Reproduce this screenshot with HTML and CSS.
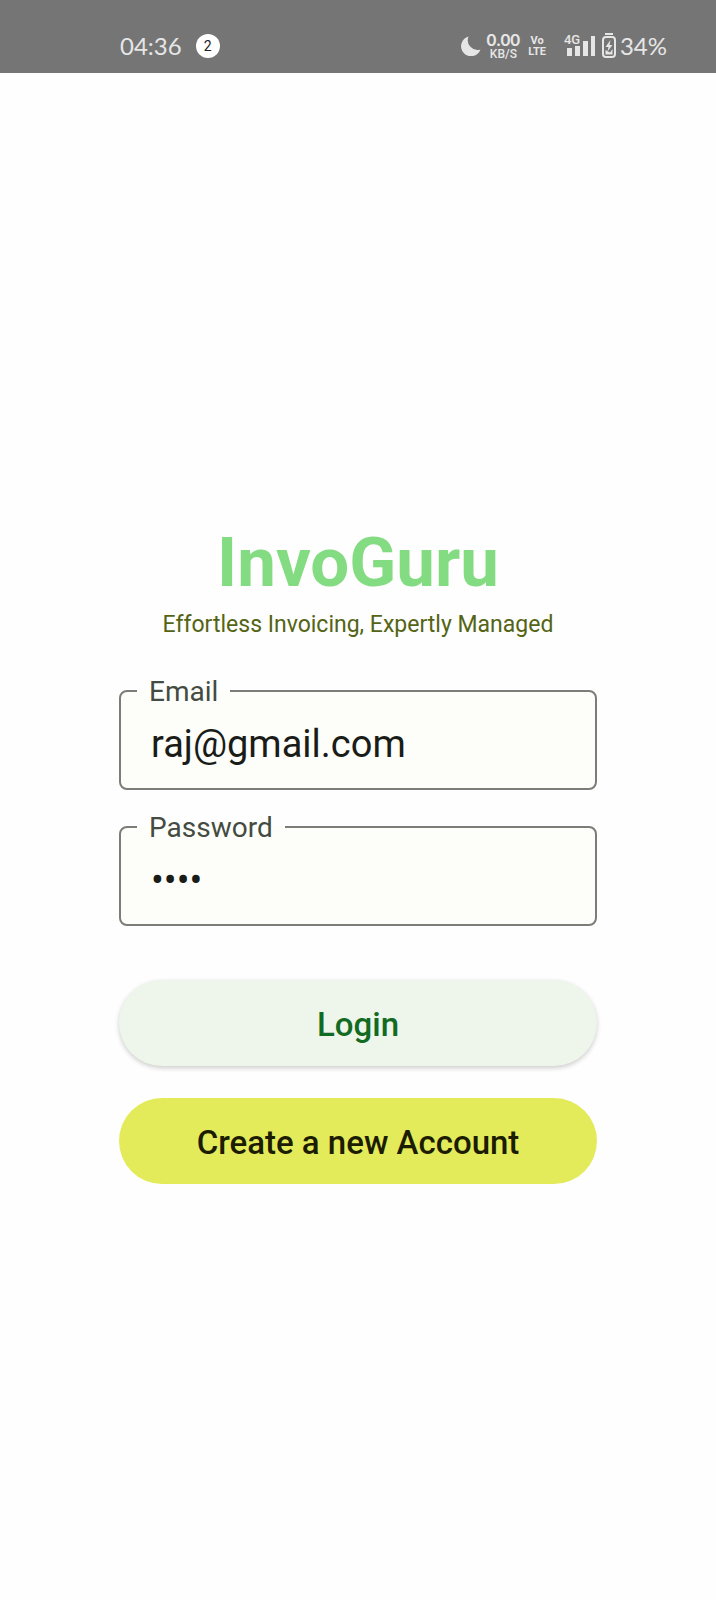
FILE: index.html
```
<!DOCTYPE html>
<html lang="en">
<head>
<meta charset="utf-8">
<meta name="viewport" content="width=device-width, initial-scale=1">
<title>InvoGuru</title>
<link rel="stylesheet" href="styles.css">
</head>
<body>
<header class="status">
  <div class="status-left">
    <span class="clock">04:36</span>
    <span class="count">2</span>
  </div>
  <div class="status-right">
    <svg class="moon" width="20" height="20" viewBox="0 0 20 20" aria-hidden="true"><path d="M7.500 0.500A10 10 0 1 0 19.500 13.500A9.800 9.800 0 0 1 7.500 0.500Z"/></svg>
    <div class="speed"><span class="rate">0.00</span><span class="unit">KB/S</span></div>
    <div class="volte"><span>Vo</span><span>LTE</span></div>
    <div class="signal">
      <span class="network">4G</span>
      <svg width="30" height="22" viewBox="0 0 30 22" aria-hidden="true"><path d="M1 13h5v8h-5zM9 11h5v10h-5zM17 6h5v15h-5zM25 1h4v20h-4z"/></svg>
    </div>
    <svg class="battery" width="14" height="26" viewBox="0 0 14 26" aria-hidden="true"><path d="M3 0h8v2H3z"/><rect class="shell" x="1" y="4" width="12" height="20" rx="3"/><path d="M8.500 7L3.500 14H6.500L5.500 18.500L10.500 12H7.500Z"/><path d="M3.500 17v4.500h7V16L8 19.500z"/></svg>
    <span class="level">34%</span>
  </div>
</header>
<main class="login">
  <h1 class="brand">InvoGuru</h1>
  <p class="tagline">Effortless Invoicing, Expertly Managed</p>
  <form class="form">
    <fieldset class="field">
      <legend class="legend"><label for="email">Email</label></legend>
      <input class="input" id="email" type="email" value="raj@gmail.com">
    </fieldset>
    <fieldset class="field">
      <legend class="legend"><label for="password">Password</label></legend>
      <input class="input" id="password" type="password" value="1234">
    </fieldset>
    <div class="actions">
      <button class="button button-login" type="submit">Login</button>
      <button class="button button-create" type="button">Create a new Account</button>
    </div>
  </form>
</main>
</body>
</html>
```
FILE: styles.css
```
* {
  box-sizing: border-box;
}

body {
  margin: 0;
  min-height: 100vh;
  background: #fefefe;
  font-family: Roboto, sans-serif;
}

.status {
  display: flex;
  align-items: center;
  justify-content: space-between;
  height: 73px;
  padding: 18px 49px 0 120px;
  background: #757575;
  color: #e6e6e6;
  font-family: Lato, sans-serif;
  font-size: 24px;
  line-height: 28px;
}

.status-left,
.status-right {
  display: flex;
  align-items: center;
}

.status-left {
  gap: 14px;
}

.status svg {
  display: block;
  fill: #e6e6e6;
}

.count {
  width: 24px;
  height: 24px;
  border-radius: 50%;
  background: #fff;
  color: #222;
  font-family: Roboto, sans-serif;
  font-size: 14px;
  line-height: 24px;
  text-align: center;
}

.speed,
.volte {
  display: flex;
  flex-direction: column;
  align-items: center;
  font-weight: 700;
}

.speed {
  margin-left: 6px;
}

.rate {
  font-size: 17px;
  line-height: 16px;
}

.unit {
  font-family: Roboto, sans-serif;
  font-size: 12px;
  font-weight: 500;
  line-height: 12px;
}

.volte {
  margin-left: 8px;
  font-family: Roboto, sans-serif;
  font-size: 11px;
  line-height: 11px;
}

.signal {
  position: relative;
  margin-left: 20px;
}

.network {
  position: absolute;
  top: -2px;
  left: -2px;
  background: #757575;
  font-family: Roboto, sans-serif;
  font-size: 13px;
  font-weight: 500;
  line-height: 13px;
}

.battery {
  margin: 0 4px 0 6px;
}

.battery .shell {
  fill: none;
  stroke: #e6e6e6;
  stroke-width: 2;
}

.login {
  padding: 450px 119px 40px;
}

.brand {
  margin: 0;
  color: #84dc82;
  font-size: 69px;
  font-weight: 700;
  line-height: 80px;
  text-align: center;
}

.tagline {
  margin: 6px 0 0;
  color: #546414;
  font-size: 23px;
  line-height: 32px;
  text-align: center;
}

.form {
  display: flex;
  flex-direction: column;
  gap: 20px;
  margin-top: 33px;
}

.field {
  min-width: 0;
  margin: 0;
  padding: 6px 16px 14px;
  border: 2px solid #7a7d78;
  border-radius: 8px;
  background: #fdfef9;
}

.legend {
  padding: 2px 12px 0;
  color: #444b42;
  font-size: 28px;
  line-height: 32px;
}

.input {
  display: block;
  width: 100%;
  height: 60px;
  padding: 0 14px;
  border: 0;
  outline: 0;
  background: none;
  color: #1a1c18;
  font-family: Roboto, sans-serif;
  font-size: 38px;
}

.actions {
  display: flex;
  flex-direction: column;
  gap: 32px;
  margin-top: 34px;
}

.button {
  height: 86px;
  padding: 2px 24px 0;
  border: 0;
  border-radius: 43px;
  font-family: Roboto, sans-serif;
  font-size: 33px;
  font-weight: 500;
}

.button-login {
  background: #eef5ea;
  color: #126b22;
  box-shadow: 0 2px 5px rgba(0, 0, 0, 0.2);
}

.button-create {
  background: #e3eb5b;
  color: #1c1d00;
}
```
